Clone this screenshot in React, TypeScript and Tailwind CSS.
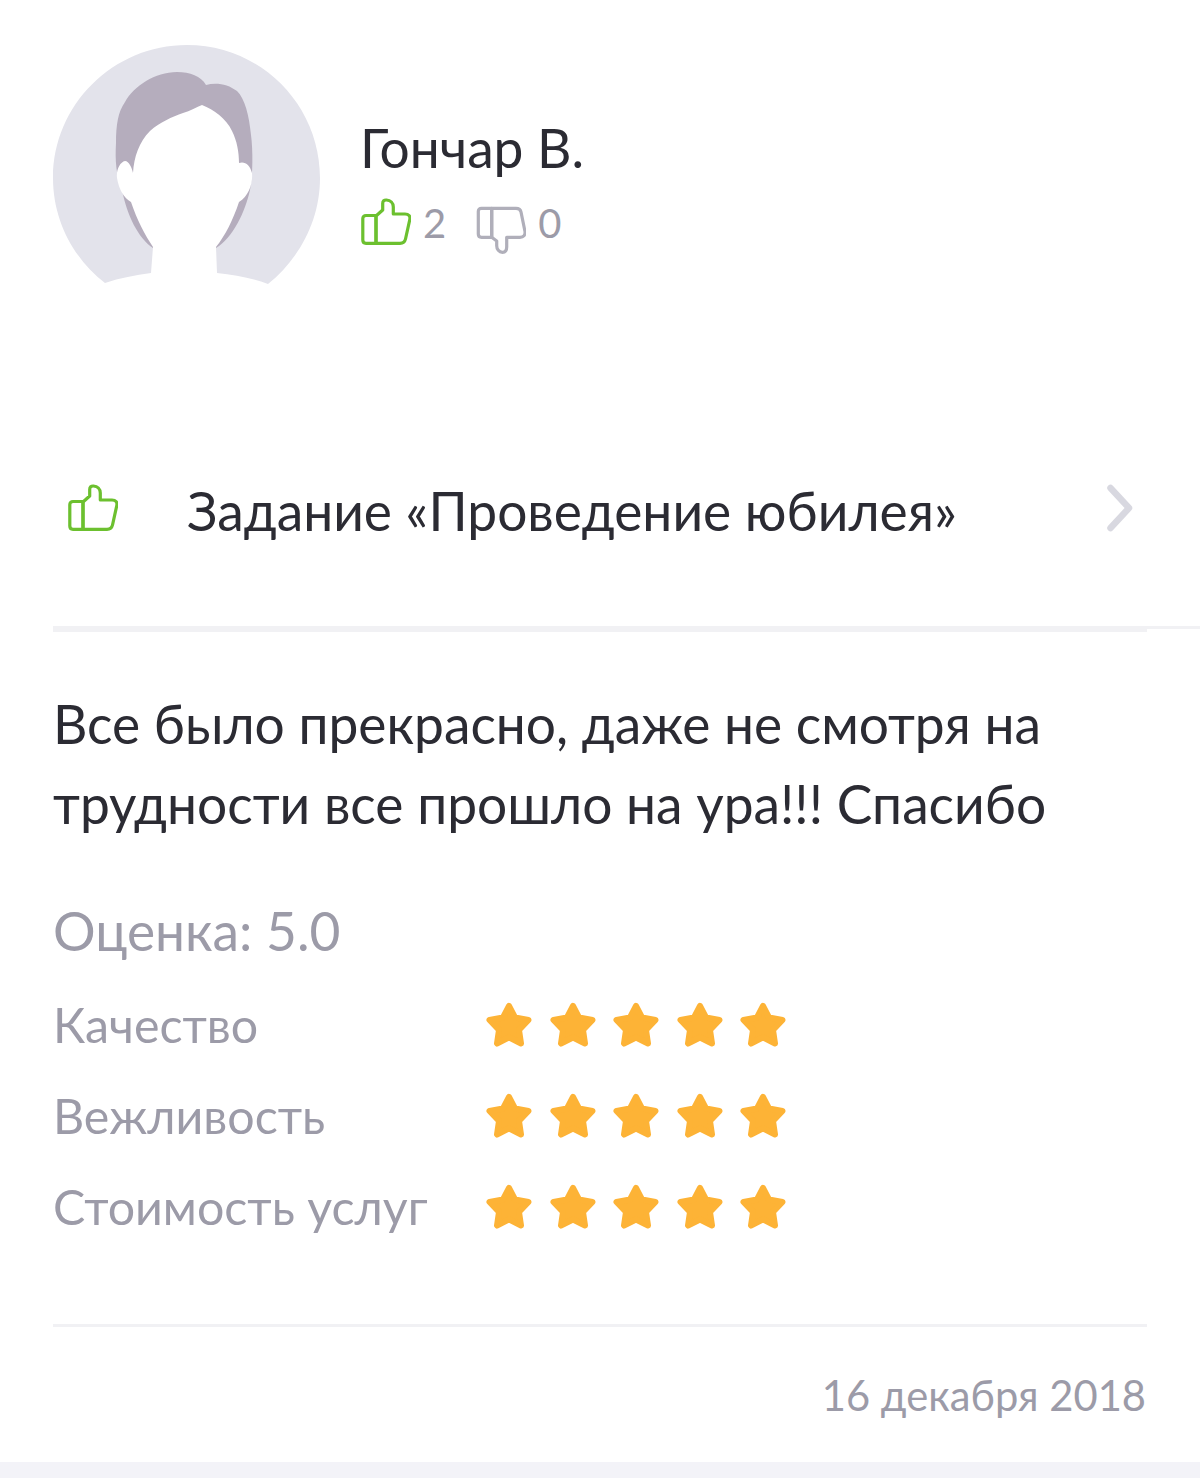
function ThumbUp({ className }: { className?: string }) {
  return (
    <svg viewBox="0 0 50 50" fill="none" stroke="currentColor" strokeWidth="3.200" strokeLinejoin="round" className={className}>
      <path d="M15 19L21.700 13V6.500C21.700 4 23 2.800 25.500 3C29.500 3.300 32.300 6 32.300 10V17H44C47.700 17 49.500 19 48.800 22.500L44.500 42C43.800 45 42 46.300 39 46.300H15Z" />
      <path d="M15 18.500H5C3 18.500 1.800 19.700 1.800 21.700V43C1.800 45 3 46.300 5 46.300H15Z" />
    </svg>
  );
}

function ThumbDown({ className }: { className?: string }) {
  return (
    <svg viewBox="0 0 50 50" fill="none" stroke="currentColor" strokeWidth="3.200" strokeLinejoin="round" className={className}>
      <path d="M15.700 4.300H40C43 4.300 44.500 5.500 45 8L49 27.500C49.500 31 47.500 33.300 44 33.300H30.700V43C30.700 46.500 29 48.300 26.500 48.300C23 48.300 20.700 45 20.700 41.700V37L15.700 33.300Z" />
      <path d="M15.700 4.300H5.500C3.500 4.300 2.300 5.500 2.300 7.500V30C2.300 32 3.500 33.300 5.500 33.300H15.700Z" />
    </svg>
  );
}

function Star() {
  return (
    <svg viewBox="0 0 48 46" className="h-[46px] w-[48px]">
      <path
        d="M24 4L30 15.500L43.500 18L34 28L36 41.500L24 35.500L12 41.500L14 28L4.500 18L18 15.500Z"
        fill="#fdb336"
        stroke="#fdb336"
        strokeWidth="6"
        strokeLinejoin="round"
      />
    </svg>
  );
}

function Avatar() {
  return (
    <svg viewBox="53 45 268 240" className="h-[240px] w-[268px] shrink-0">
      <path
        d="M105 283C75 260 53 222 53 178C53 105 113 45 187 45C261 45 320 105 320 178C320 222 298 260 268 284C252 278 235 275 217 273H151C135 275 120 278 105 283Z"
        fill="#e3e3eb"
      />
      <path
        d="M116 143C116 125 118 112 125 102C134 86 155 72 177 72C190 72 201 76 206 85C216 82 228 84 237 91C245 99 249 115 251 135C253 150 253 175 250 190C245 212 233 238 216 248H153C138 238 127 215 122 190C116 175 115 160 116 143Z"
        fill="#b5adbd"
      />
      <path
        d="M125 161C129 161 132 168 133 173C134 157 139 142 150 131C160 122 172 117 183 113C190 111 197 107 202 105C214 110 226 118 232 131C237 141 239 152 239 163C245 161 250 165 252 173C253 183 249 196 239 202C233 220 225 236 216 247L217 273L230 285H140L151 273L153 247C145 235 137 220 131 202C124 198 119 190 117 178C116 170 120 162 125 161Z"
        fill="#ffffff"
      />
    </svg>
  );
}

function RatingRow({ label }: { label: string }) {
  return (
    <div className="flex h-[91px] items-center">
      <div className="w-[432px] text-[48.300px] text-[#9c9ba8]">{label}</div>
      <div className="flex gap-[15.500px]">
        <Star />
        <Star />
        <Star />
        <Star />
        <Star />
      </div>
    </div>
  );
}

export default function App() {
  return (
    <div className="flex h-[1478px] w-[1200px] flex-col overflow-hidden bg-white font-['Lato','Noto_Sans',sans-serif] text-[#2b2b33]">
      <div className="flex h-[626px] shrink-0 flex-col px-[53px] pt-[45px]">
        <div className="flex gap-[39px]">
          <Avatar />
          <div className="pt-[70px]">
            <div className="text-[53.300px] leading-[64px]">Гончар В.</div>
            <div className="mt-[13px] flex items-center text-[40px] text-[#9c9ba8]">
              <ThumbUp className="ml-[1px] h-[50px] w-[50px] text-[#6cc02f]" />
              <span className="ml-[12px] translate-y-[1px]">2</span>
              <ThumbDown className="ml-[30px] h-[50px] w-[50px] translate-y-[7px] text-[#b0afba]" />
              <span className="ml-[12px] translate-y-[1px]">0</span>
            </div>
          </div>
        </div>
        <div className="mt-[189px] flex items-center">
          <ThumbUp className="ml-[15px] h-[50px] w-[50px] text-[#6cc02f]" />
          <div className="ml-[69px] mt-[4px] flex-1 text-[53.300px] leading-[64px]">Задание «Проведение юбилея»</div>
          <svg viewBox="0 0 30 48" fill="none" stroke="#d8d8e0" strokeWidth="6.500" strokeLinecap="round" strokeLinejoin="round" className="mr-[12px] h-[48px] w-[30px]">
            <path d="M5.500 4L24 24L5.500 44" />
          </svg>
        </div>
      </div>
      <div className="flex items-start">
        <div className="ml-[53px] h-[6px] w-[1094px] bg-[#f1f1f4]" />
        <div className="h-[3px] flex-1 bg-[#f1f1f4]" />
      </div>
      <div className="px-[53px]">
        <p className="mt-[51px] text-[53.300px] leading-[80px]">
          Все было прекрасно, даже не смотря на
          <br />
          трудности все прошло на ура!!! Спасибо
        </p>
        <div className="mt-[52px] text-[53.300px] leading-[70px] text-[#9c9ba8]">Оценка: 5.0</div>
        <div className="mt-[14px]">
          <RatingRow label="Качество" />
          <RatingRow label="Вежливость" />
          <RatingRow label="Стоимость услуг" />
        </div>
        <div className="mt-[72px] h-[3px] bg-[#f1f1f4]" />
        <div className="mr-[1px] mt-[42px] text-right text-[41.700px] leading-[52px] text-[#9c9ba8]">16 декабря 2018</div>
      </div>
      <div className="mt-[41px] flex-1 bg-[#f3f3f8]" />
    </div>
  );
}
